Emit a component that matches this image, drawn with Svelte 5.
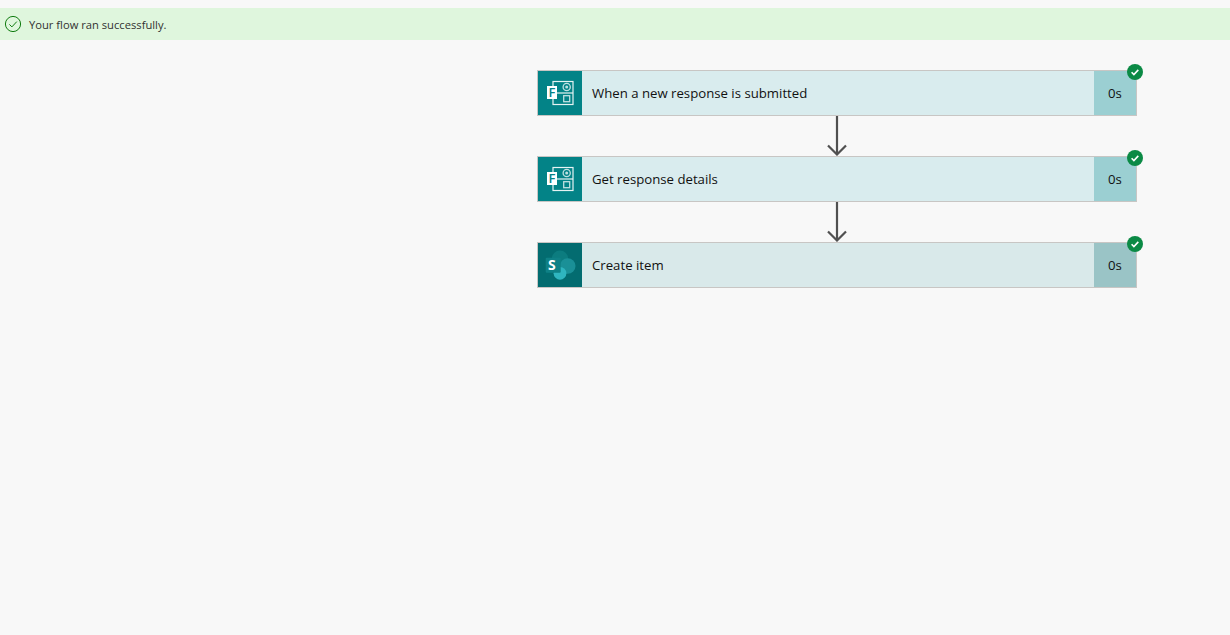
<script>
  const steps = [
    { title: 'When a new response is submitted', kind: 'forms' },
    { title: 'Get response details', kind: 'forms' },
    { title: 'Create item', kind: 'sharepoint' }
  ];
</script>

<div class="page">
  <div class="banner">
    <svg class="banner-icon" viewBox="0 0 18 18" fill="none">
      <circle cx="9" cy="9" r="7.6" stroke="#107c10" stroke-width="1" />
      <path d="M5.4 9.4l2.5 2.5 4.9-5.3" stroke="#107c10" stroke-width="1" />
    </svg>
    <span>Your flow ran successfully.</span>
  </div>

  <div class="flow">
    {#each steps as step, i}
      {#if i > 0}
        <div class="connector">
          <svg viewBox="0 0 22 40" width="22" height="40" fill="none" stroke="#505050" stroke-width="2.2">
            <path d="M11 0v38" />
            <path d="M2 29.5l9 9 9-9" />
          </svg>
        </div>
      {/if}
      <div class="card {step.kind}">
        <div class="icon">
          {#if step.kind === 'forms'}
            <svg viewBox="0 0 32 32" width="32" height="32">
              <rect x="9" y="4.5" width="20" height="23" fill="none" stroke="#e6f3f3" stroke-width="1.2" />
              <path d="M9 16h20" stroke="#e6f3f3" stroke-width="1.2" />
              <circle cx="22.7" cy="10" r="3.6" fill="none" stroke="#bfe0e1" stroke-width="1.3" />
              <circle cx="22.7" cy="10" r="1.5" fill="#bfe0e1" />
              <rect x="19.7" y="18.7" width="6" height="6" fill="none" stroke="#bfe0e1" stroke-width="1.3" />
              <rect x="3" y="9" width="10" height="13" fill="#fff" />
            </svg>
            <span class="letter f">F</span>
          {:else}
            <svg viewBox="0 0 32 32" width="32" height="32">
              <circle cx="16" cy="9.7" r="8.2" fill="#0c7c7f" />
              <circle cx="23.7" cy="17" r="7.8" fill="#1a9097" />
              <circle cx="16" cy="24.3" r="6.4" fill="#2fb5bf" />
              <rect x="1.7" y="8.7" width="15" height="15" rx="1" fill="#0f8186" />
            </svg>
            <span class="letter s">S</span>
          {/if}
        </div>
        <div class="title">{step.title}</div>
        <div class="duration">0s</div>
        <div class="badge">
          <svg viewBox="0 0 16 16" width="16" height="16">
            <circle cx="8" cy="8" r="8" fill="#0b8a45" />
            <path d="M4.6 8.2l2.3 2.3 4.4-4.6" fill="none" stroke="#fff" stroke-width="1.6" />
          </svg>
        </div>
      </div>
    {/each}
  </div>
</div>

<style>
  :global(body) {
    margin: 0;
    background: #f8f8f8;
  }

  .page {
    height: 635px;
    padding-top: 8px;
    box-sizing: border-box;
    font-family: 'Open Sans', 'Noto Sans', sans-serif;
    color: #111;
    overflow: hidden;
  }

  .banner {
    height: 32px;
    display: flex;
    align-items: center;
    gap: 7px;
    padding-left: 4px;
    background: #dff6dd;
    font-size: 11.2px;
    color: #323130;
  }

  .banner-icon {
    width: 18px;
    height: 18px;
  }

  .flow {
    width: 600px;
    margin: 30px 0 0 537px;
    display: flex;
    flex-direction: column;
  }

  .connector {
    height: 40px;
    display: flex;
    justify-content: center;
  }

  .card {
    position: relative;
    height: 46px;
    box-sizing: border-box;
    display: flex;
    border: 1px solid #c8c6c4;
    font-size: 13.2px;
  }

  .icon {
    position: relative;
    width: 44px;
    flex: none;
    display: flex;
    align-items: center;
    justify-content: center;
  }

  .title {
    flex: 1;
    padding-left: 10px;
    line-height: 44px;
  }

  .duration {
    width: 42px;
    flex: none;
    text-align: center;
    line-height: 44px;
  }

  .forms .icon { background: #038387; }
  .forms .title { background: #d9ecee; }
  .forms .duration { background: #9bcfd2; }

  .sharepoint .icon { background: #036c70; }
  .sharepoint .title { background: #d9e9ea; }
  .sharepoint .duration { background: #9ac4c6; }

  .letter {
    position: absolute;
    line-height: 1;
  }

  .letter.f {
    left: 10.5px;
    top: 15px;
    font-size: 13px;
    font-weight: 600;
    color: #038387;
  }

  .letter.s {
    left: 10px;
    top: 14.5px;
    font-size: 14px;
    font-weight: 700;
    color: #fff;
  }

  .badge {
    position: absolute;
    top: -7px;
    right: -7px;
    width: 16px;
    height: 16px;
    line-height: 0;
  }
</style>
